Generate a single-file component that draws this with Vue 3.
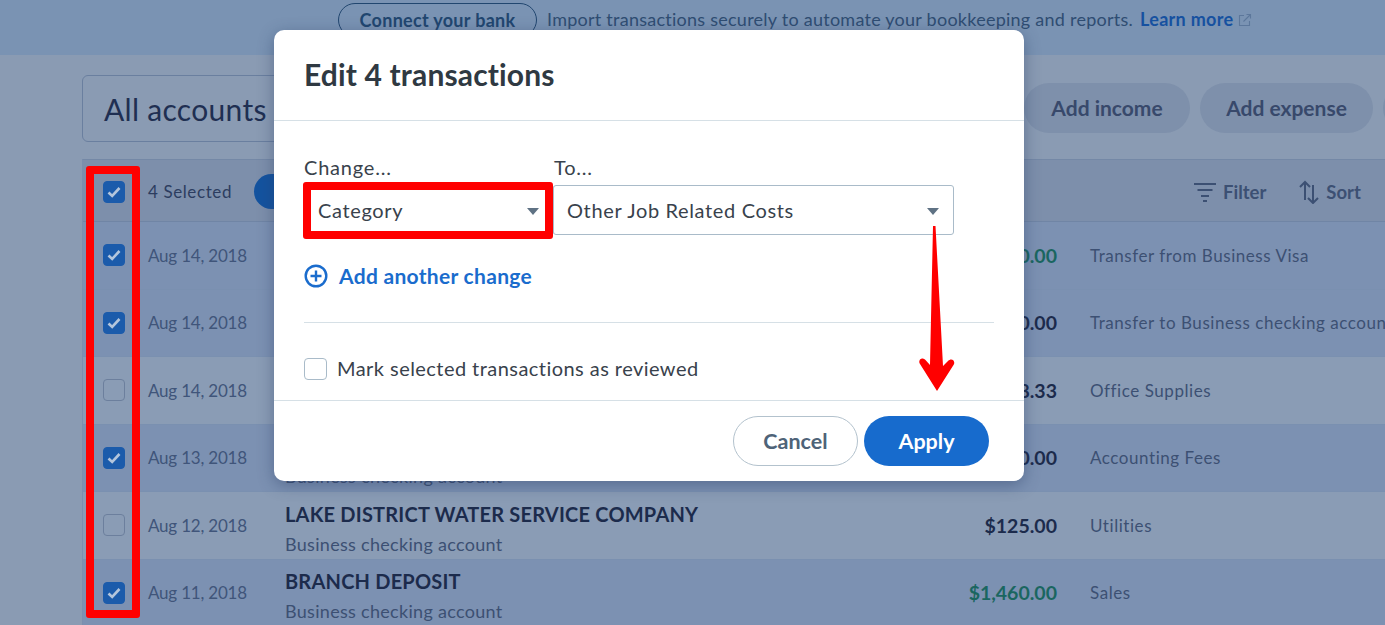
<script setup>
const rows = [
  { date: 'Aug 14, 2018', amount: '$500.00', income: true, category: 'Transfer from Business Visa', checked: true },
  { date: 'Aug 14, 2018', amount: '$500.00', income: false, category: 'Transfer to Business checking account', checked: true },
  { date: 'Aug 14, 2018', amount: '$48.33', income: false, category: 'Office Supplies', checked: false },
  { date: 'Aug 13, 2018', account: 'Business checking account', amount: '$150.00', income: false, category: 'Accounting Fees', checked: true },
  { date: 'Aug 12, 2018', name: 'LAKE DISTRICT WATER SERVICE COMPANY', account: 'Business checking account', amount: '$125.00', income: false, category: 'Utilities', checked: false },
  { date: 'Aug 11, 2018', name: 'BRANCH DEPOSIT', account: 'Business checking account', amount: '$1,460.00', income: true, category: 'Sales', checked: true },
]
</script>

<template>
  <div class="page">
    <div class="banner">
      <button class="connect">Connect your bank</button>
      <span class="banner-text">Import transactions securely to automate your bookkeeping and reports.</span>
      <a class="learn">Learn more</a>
      <svg class="ext" width="14" height="14" viewBox="0 0 14 14" fill="none" stroke="#5c779b" stroke-width="1.1">
        <path d="M6 2.5H1.5v10h10V8" />
        <path d="M5.5 8.5L12.5 1.5M8.5 1.5h4v4" />
      </svg>
    </div>

    <div class="content">
      <div class="toolbar">
        <div class="account-select">All accounts</div>
        <div class="actions">
          <button class="soft">Add income</button>
          <button class="soft">Add expense</button>
          <button class="soft more"></button>
        </div>
      </div>

      <div class="table">
        <div class="head">
          <div class="cell-check">
            <span class="box on">
              <svg width="16" height="16" viewBox="0 0 16 16" fill="none" stroke="#b3c5dc" stroke-width="2.6"><path d="M2.5 8.5l3.700 3.500 7.300-8" /></svg>
            </span>
          </div>
          <span class="selected-count">4 Selected</span>
          <span class="head-pill"></span>
          <div class="head-tools">
            <span class="tool">
              <svg width="24" height="22" viewBox="0 0 24 22" fill="none" stroke="#3c5073" stroke-width="2.2"><path d="M1 3h22M4.500 9h15M8 15h8M10 20h4" /></svg>
              Filter
            </span>
            <span class="tool">
              <svg width="22" height="24" viewBox="0 0 22 24" fill="none" stroke="#3c5073" stroke-width="2"><path d="M7 20V2M2 7l5-5 5 5M15 5v18M10 18l5 5 5-5" /></svg>
              Sort
            </span>
          </div>
        </div>

        <div v-for="(r, i) in rows" :key="i" class="row" :class="{ picked: r.checked }">
          <div class="cell-check">
            <span class="box" :class="{ on: r.checked }">
              <svg v-if="r.checked" width="16" height="16" viewBox="0 0 16 16" fill="none" stroke="#b3c5dc" stroke-width="2.6"><path d="M2.5 8.5l3.700 3.500 7.300-8" /></svg>
            </span>
          </div>
          <span class="date">{{ r.date }}</span>
          <div class="desc">
            <div class="name">{{ r.name }}</div>
            <div class="account">{{ r.account }}</div>
          </div>
          <span class="amount" :class="{ income: r.income }">{{ r.amount }}</span>
          <span class="category">{{ r.category }}</span>
        </div>
      </div>
    </div>

    <div class="modal">
      <div class="modal-head">Edit 4 transactions</div>
      <div class="modal-body">
        <div class="fields">
          <div class="field first">
            <label>Change...</label>
            <div class="select">Category<i class="caret"></i></div>
          </div>
          <div class="field second">
            <label>To...</label>
            <div class="select">Other Job Related Costs<i class="caret"></i></div>
          </div>
        </div>
        <a class="add-change">
          <svg width="24" height="24" viewBox="0 0 24 24" fill="none" stroke="#1a6ccd" stroke-width="2.4">
            <circle cx="12" cy="12" r="10.300" />
            <path d="M12 6.500v11M6.500 12h11" />
          </svg>
          Add another change
        </a>
        <div class="divider"></div>
        <label class="mark"><span class="mark-box"></span>Mark selected transactions as reviewed</label>
      </div>
      <div class="modal-foot">
        <button class="cancel">Cancel</button>
        <button class="apply">Apply</button>
      </div>
    </div>

    <div class="red-box left"></div>
    <div class="red-box cat"></div>
    <svg class="arrow" width="40" height="170" viewBox="0 0 40 170">
      <path d="M14 0h2.500L24 140l5-5c2-2 4-2 5.500-.5 1 1.500 1 3 0 4.500L18 165 1 138c-1-1.500-1-3 0-4.500C2.500 132 4.500 132 6.500 134l4.500 5z" fill="#f00" />
    </svg>
  </div>
</template>

<style scoped>
.page {
  position: relative;
  width: 1385px;
  height: 625px;
  overflow: hidden;
  background: #8a9bb3;
  font-family: Lato, "Open Sans", sans-serif;
  color: #1d2c4c;
}

button {
  font-family: inherit;
  cursor: pointer;
}

.banner {
  height: 55px;
  box-sizing: border-box;
  padding: 3px 0 0 338px;
  display: flex;
  align-items: flex-start;
  background: #7a93b3;
  white-space: nowrap;
}

.connect {
  width: 199px;
  height: 34px;
  margin-right: 10px;
  border: 1px solid #21466f;
  border-radius: 17px;
  background: transparent;
  font-size: 18px;
  letter-spacing: .3px;
  font-weight: 700;
  color: #21466f;
}

.banner-text {
  line-height: 33px;
  font-size: 18px;
  color: #2f4d72;
  letter-spacing: .25px;
}

.learn {
  margin-left: 7px;
  line-height: 33px;
  font-size: 18px;
  letter-spacing: .3px;
  font-weight: 700;
  color: #1651a0;
}

.ext {
  margin: 10px 0 0 5px;
}

.content {
  padding: 20px 0 0 82px;
}

.toolbar {
  display: flex;
  justify-content: space-between;
  height: 67px;
  margin-bottom: 17px;
}

.account-select {
  width: 300px;
  box-sizing: border-box;
  padding-left: 21px;
  border: 1px solid #6a7f9f;
  border-radius: 6px;
  line-height: 66px;
  font-size: 30px;
  letter-spacing: .3px;
  color: #1f2f52;
}

.actions {
  display: flex;
  gap: 10px;
  padding-top: 8px;
  margin-right: -48px;
}

.soft {
  width: 166px;
  height: 50px;
  padding-bottom: 3px;
  border: none;
  border-radius: 25px;
  background: #7e90ab;
  font-size: 21px;
  font-weight: 700;
  color: #38496b;
}

.soft + .soft {
  width: 173px;
}

.soft.more {
  width: 50px;
}

.table {
  width: 1400px;
  border-left: 1px solid #7b8fae;
  border-top: 1px solid #7488a6;
}

.head {
  display: flex;
  align-items: center;
  height: 62px;
  box-sizing: border-box;
  padding-top: 2px;
  background: #7d8fab;
  border-bottom: 1px solid #7085a5;
}

.cell-check {
  width: 61px;
  flex: none;
  display: flex;
  justify-content: center;
}

.box {
  width: 22px;
  height: 22px;
  box-sizing: border-box;
  display: flex;
  align-items: center;
  justify-content: center;
  border: 1px solid #6c7f9d;
  border-radius: 4px;
}

.box.on {
  background: #1b5bab;
  border-color: #1b5bab;
}

.selected-count {
  width: 110px;
  margin-left: 4px;
  margin-right: -4px;
  font-size: 17px;
  color: #2c3d60;
  letter-spacing: .6px;
}

.head-pill {
  width: 120px;
  height: 35px;
  border-radius: 18px;
  background: #14539f;
}

.head-tools {
  display: flex;
  gap: 32px;
  margin-left: 819px;
}

.tool {
  display: flex;
  align-items: center;
  gap: 6px;
  font-size: 18.5px;
  font-weight: 700;
  color: #3c5073;
}

.row {
  display: flex;
  align-items: center;
  height: 67.5px;
  box-sizing: border-box;
  background: #8a9cb5;
  border-bottom: 1px solid #7a90b0;
}

.row.picked {
  background: #7c91b2;
}

.date {
  width: 137px;
  margin-left: 4px;
  flex: none;
  font-size: 17px;
  color: #40557a;
  letter-spacing: -.2px;
}

.desc {
  width: 610px;
  flex: none;
  padding-top: 6px;
}

.name {
  min-height: 26px;
  font-size: 20px;
  font-weight: 700;
  line-height: 26px;
  color: #1c2b4c;
  letter-spacing: .2px;
  white-space: nowrap;
}

.account {
  min-height: 24px;
  margin-top: 5px;
  font-size: 18px;
  line-height: 24px;
  color: #3c5073;
  letter-spacing: .3px;
}

.amount {
  width: 162px;
  flex: none;
  text-align: right;
  font-size: 19.5px;
  font-weight: 700;
  color: #1c2b4c;
}

.amount.income {
  color: #1a6660;
}

.category {
  margin-left: 33px;
  font-size: 17px;
  color: #3c5073;
  letter-spacing: .55px;
  white-space: nowrap;
}

/* dialog */
.modal {
  position: absolute;
  left: 274px;
  top: 30px;
  width: 750px;
  height: 451px;
  display: flex;
  flex-direction: column;
  background: #fff;
  border-radius: 10px;
  box-shadow: 0 4px 16px rgba(40, 60, 100, .45);
  color: #39424c;
}

.modal-head {
  height: 91px;
  box-sizing: border-box;
  padding: 27px 0 0 30px;
  border-bottom: 1px solid #d6e0e6;
  font-size: 30px;
  font-weight: 700;
  line-height: 34px;
  letter-spacing: .15px;
  color: #2f3942;
}

.modal-body {
  flex: 1;
  padding: 35px 30px 0;
}

.fields {
  display: flex;
}

.field label {
  display: block;
  height: 29px;
  font-size: 20px;
  line-height: 23px;
  letter-spacing: .8px;
}

.field.first {
  width: 250px;
}

.field.second {
  width: 400px;
}

.field.second .select {
  margin-left: -1px;
}

.select {
  position: relative;
  height: 50px;
  box-sizing: border-box;
  padding-left: 13px;
  border: 1px solid #a9bbc9;
  border-radius: 3px;
  line-height: 48px;
  font-size: 20px;
  letter-spacing: .65px;
}

.caret {
  position: absolute;
  right: 14px;
  top: 22px;
  border: 6px solid transparent;
  border-top: 7px solid #5f7284;
  border-bottom: none;
}

.add-change {
  display: flex;
  align-items: center;
  gap: 11px;
  margin-top: 29px;
  font-size: 21px;
  font-weight: 700;
  line-height: 24px;
  color: #1a6ccd;
  letter-spacing: .3px;
}

.divider {
  width: 690px;
  height: 1px;
  margin-top: 34px;
  background: #d6e0e6;
}

.mark {
  display: flex;
  align-items: center;
  gap: 10px;
  margin-top: 34px;
  font-size: 20px;
  line-height: 23px;
  letter-spacing: .45px;
}

.mark-box {
  width: 23px;
  height: 22px;
  box-sizing: border-box;
  border: 1px solid #a9bbc9;
  border-radius: 4px;
}

.modal-foot {
  height: 81px;
  box-sizing: border-box;
  display: flex;
  justify-content: flex-end;
  gap: 6px;
  padding: 15px 35px 0 0;
  border-top: 1px solid #d6e0e6;
}

.modal-foot button {
  height: 50px;
  border-radius: 25px;
  font-size: 21.5px;
  font-weight: 700;
}

.cancel {
  width: 125px;
  background: #fff;
  border: 1px solid #b3c2cd;
  color: #4e6378;
}

.apply {
  width: 125px;
  background: #176bcd;
  border: none;
  color: #fff;
}

/* red annotations drawn on the screenshot */
.red-box {
  position: absolute;
  box-sizing: border-box;
  border: 8px solid #f00;
  border-radius: 3px;
}

.red-box.left {
  left: 86px;
  top: 166px;
  width: 54px;
  height: 452px;
}

.red-box.cat {
  left: 303px;
  top: 182px;
  width: 250px;
  height: 57px;
}

.arrow {
  position: absolute;
  left: 919px;
  top: 226px;
}
</style>
